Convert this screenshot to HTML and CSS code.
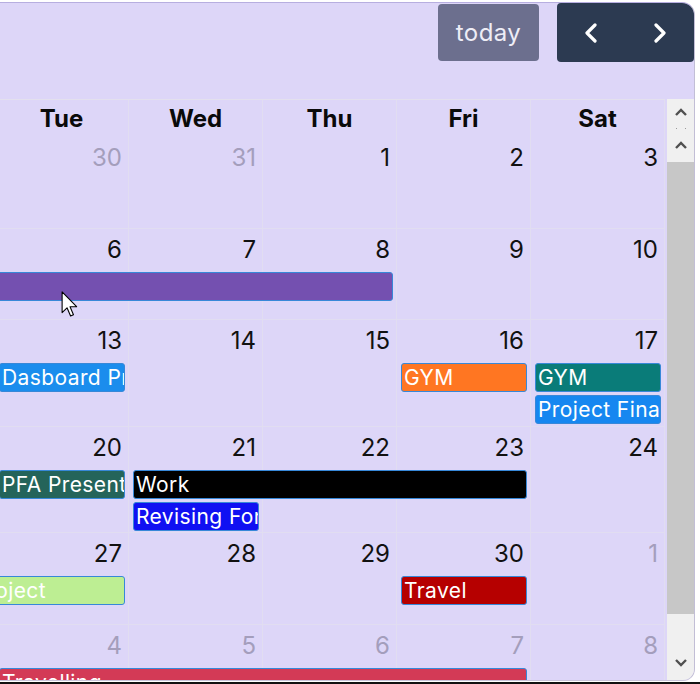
FILE: index.html
```html
<!DOCTYPE html>
<html>
<head>
<meta charset="utf-8">
<link rel="stylesheet" href="styles.css">
</head>
<body>
<div class="app">
  <div class="toolbar">
    <button class="today">today</button>
    <div class="nav">
      <button class="navbtn"><svg width="14" height="20" viewBox="0 0 14 20"><path d="M11 2 L3 10 L11 18" fill="none" stroke="#fff" stroke-width="3.2" stroke-linecap="round" stroke-linejoin="round"/></svg></button>
      <button class="navbtn"><svg width="14" height="20" viewBox="0 0 14 20"><path d="M3 2 L11 10 L3 18" fill="none" stroke="#fff" stroke-width="3.2" stroke-linecap="round" stroke-linejoin="round"/></svg></button>
    </div>
  </div>
  <div class="calendar">
    <div class="viewport">
      <div class="inner">
        <div class="head">
          <div class="hcell">Sun</div><div class="hcell">Mon</div><div class="hcell">Tue</div><div class="hcell">Wed</div><div class="hcell">Thu</div><div class="hcell">Fri</div><div class="hcell">Sat</div>
        </div>

        <div class="week">
          <div class="bg">
            <div class="day other">28</div><div class="day other">29</div><div class="day other">30</div><div class="day other">31</div><div class="day">1</div><div class="day">2</div><div class="day">3</div>
          </div>
          <div class="fg"></div>
        </div>

        <div class="week">
          <div class="bg">
            <div class="day">4</div><div class="day">5</div><div class="day">6</div><div class="day">7</div><div class="day">8</div><div class="day">9</div><div class="day">10</div>
          </div>
          <div class="fg">
            <div class="ev purple c1 s5">Exam Week</div>
          </div>
        </div>

        <div class="week two">
          <div class="bg">
            <div class="day">11</div><div class="day">12</div><div class="day">13</div><div class="day">14</div><div class="day">15</div><div class="day">16</div><div class="day">17</div>
          </div>
          <div class="fg">
            <div class="ev blue c3 s1">Dasboard Project</div>
            <div class="ev orange c6 s1">GYM</div>
            <div class="ev teal c7 s1">GYM</div>
            <div class="ev sky c7 s1 r2">Project Final</div>
          </div>
        </div>

        <div class="week two">
          <div class="bg">
            <div class="day">18</div><div class="day">19</div><div class="day">20</div><div class="day">21</div><div class="day">22</div><div class="day">23</div><div class="day">24</div>
          </div>
          <div class="fg">
            <div class="ev green c3 s1">PFA Presentation</div>
            <div class="ev black c4 s3">Work</div>
            <div class="ev royal c4 s1 r2">Revising For Exams</div>
          </div>
        </div>

        <div class="week">
          <div class="bg">
            <div class="day">25</div><div class="day">26</div><div class="day">27</div><div class="day">28</div><div class="day">29</div><div class="day">30</div><div class="day other">1</div>
          </div>
          <div class="fg">
            <div class="ev lime c2 s2">Dasboard Project</div>
            <div class="ev maroon c6 s1">Travel</div>
          </div>
        </div>

        <div class="week">
          <div class="bg">
            <div class="day other">2</div><div class="day other">3</div><div class="day other">4</div><div class="day other">5</div><div class="day other">6</div><div class="day other">7</div><div class="day other">8</div>
          </div>
          <div class="fg">
            <div class="ev red c3 s4">Travelling</div>
          </div>
        </div>
      </div>
    </div>
    <div class="vscroll">
      <div class="sb-up">
        <svg width="14" height="8" viewBox="0 0 14 8"><path d="M2 7 L7 2 L12 7" fill="none" stroke="#505050" stroke-width="2.4"/></svg>
        <div class="dots"><span></span><span></span></div>
        <svg width="14" height="8" viewBox="0 0 14 8"><path d="M2 7 L7 2 L12 7" fill="none" stroke="#505050" stroke-width="2.4"/></svg>
      </div>
      <div class="thumb"></div>
      <div class="track"></div>
      <div class="sb-down">
        <svg width="14" height="8" viewBox="0 0 14 8"><path d="M2 1 L7 6 L12 1" fill="none" stroke="#505050" stroke-width="2.4"/></svg>
      </div>
    </div>
  </div>
</div>
<div class="floor"></div>
<svg class="cursor" width="17" height="26" viewBox="0 0 12 19"><path d="M0.6 0.6 L0.6 15.8 L4.2 12.3 L6.8 18.2 L8.9 17.3 L6.4 11.5 L11.2 11.5 Z" fill="#fff" stroke="#000" stroke-width="0.8" stroke-linejoin="round"/></svg>
</body>
</html>
```

FILE: styles.css
```css
* { box-sizing: border-box; }

body {
  margin: 0;
  background: #ffffff;
  font-family: Inter, "Noto Sans", sans-serif;
}

.app {
  margin-top: 2px;
  width: 695px;
  height: 679px;
  background: #ddd6f8;
  border-top: 1px solid #b7aee0;
  border-right: 1px solid #c2bed6;
  border-bottom: 1px solid #c8c4da;
  border-radius: 0 13px 12px 0;
  overflow: hidden;
  display: flex;
  flex-direction: column;
}

.toolbar {
  height: 96px;
  flex: none;
  display: flex;
  justify-content: flex-end;
  align-items: flex-start;
  gap: 18px;
}

.today {
  margin-top: 1px;
  width: 101px;
  height: 57px;
  border: none;
  border-radius: 4px;
  background: #6c6f8e;
  color: #eeedf6;
  font-family: inherit;
  font-size: 24px;
  letter-spacing: 0.4px;
  padding: 0;
}

.nav {
  width: 137px;
  height: 59px;
  background: #2c3a51;
  border-radius: 4px 0 4px 4px;
  display: flex;
}

.navbtn {
  flex: 1;
  border: none;
  background: transparent;
  display: flex;
  align-items: center;
  justify-content: center;
  padding: 0;
}

.calendar {
  flex: 1;
  display: flex;
  min-height: 0;
}

.viewport {
  width: 667px;
  overflow: hidden;
}

.inner {
  width: 938px;
  margin-left: -273px;
}

.head {
  display: grid;
  grid-template-columns: repeat(7, 134px);
  height: 38px;
  border-top: 1px solid #e3e0ee;
}

.hcell {
  text-align: center;
  font-weight: 700;
  font-size: 24px;
  line-height: 37px;
  color: #0a0a0a;
  border-right: 1px solid #e1ddf1;
}

.week {
  display: grid;
  min-height: 91.5px;
}

.week.two {
  min-height: 106.5px;
}

.week > .bg,
.week > .fg {
  grid-area: 1 / 1;
}

.bg {
  display: grid;
  grid-template-columns: repeat(7, 134px);
}

.day {
  border-right: 1px solid #e1ddf1;
  border-bottom: 1px solid #e1ddf1;
  padding: 7px 6px 0 0;
  text-align: right;
  font-size: 24px;
  line-height: 28px;
  color: #111;
}

.day.other {
  color: #a49ebc;
}

.fg {
  display: grid;
  grid-template-columns: repeat(7, 134px);
  grid-auto-rows: 29px;
  row-gap: 3px;
  padding-top: 43px;
  align-content: start;
}

.ev {
  grid-row: 1;
  margin: 0 4px;
  height: 29px;
  border: 1px solid #3788d8;
  border-radius: 3px;
  color: #fff;
  font-size: 21px;
  line-height: 27px;
  letter-spacing: 0.4px;
  padding: 0 2px;
  white-space: nowrap;
  overflow: hidden;
}

.ev.r2 { grid-row: 2; }

.c1 { grid-column-start: 1; }
.c2 { grid-column-start: 2; }
.c3 { grid-column-start: 3; }
.c4 { grid-column-start: 4; }
.c6 { grid-column-start: 6; }
.c7 { grid-column-start: 7; }
.s1 { grid-column-end: span 1; }
.s2 { grid-column-end: span 2; }
.s3 { grid-column-end: span 3; }
.s4 { grid-column-end: span 4; }
.s5 { grid-column-end: span 5; }

.purple { background: #7450b0; }
.blue { background: #1b8ded; }
.orange { background: #ff7622; }
.teal { background: #0a7c79; }
.sky { background: #1687f0; }
.green { background: #24645a; }
.black { background: #000; }
.royal { background: #1010f2; }
.lime { background: #bdee93; }
.maroon { background: #b60000; }
.red { background: #d33a56; }

.vscroll {
  width: 27px;
  background: #f0f0f0;
  display: flex;
  flex-direction: column;
}

.sb-up {
  height: 63px;
  display: flex;
  flex-direction: column;
  align-items: center;
  padding-top: 9px;
}

.dots {
  height: 25px;
  width: 14px;
  display: flex;
  justify-content: space-between;
  align-items: center;
  padding: 0 2px;
}

.dots span {
  width: 1px;
  height: 1px;
  background: #9a9a9a;
}

.thumb {
  height: 452px;
  background: #c7c7c7;
}

.track {
  flex: 1;
}

.sb-down {
  height: 30px;
  display: flex;
  justify-content: center;
  padding-top: 9px;
}

.floor {
  margin-top: 1px;
  height: 2px;
  background: #111;
}

.cursor {
  position: absolute;
  left: 61px;
  top: 291px;
}
```
